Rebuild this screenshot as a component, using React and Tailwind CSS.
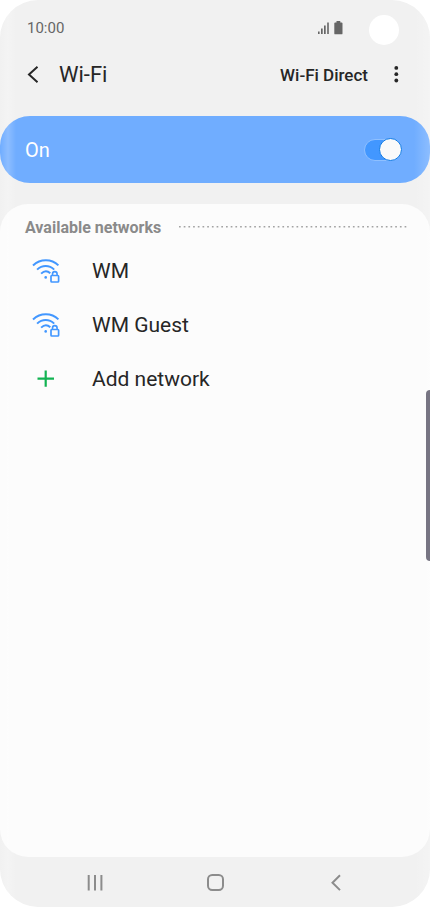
import { useState } from "react";

function SecureWifiIcon() {
  return (
    <svg viewBox="0 0 28 26" className="h-[26px] w-7" fill="none" stroke="#4297ff" strokeWidth="2" aria-hidden="true">
      <path d="M1 7.4C8.4.5 19.4.5 26.4 7.4" />
      <path d="M5.1 11.6C10.100 6.800 17.300 6.800 22.200 11.600" />
      <path d="M9.100 15.600C12.100 12.700 15.600 12.700 18.300 15.300" />
      <circle cx="13.700" cy="19.400" r="1.300" fill="#4297ff" stroke="none" />
      <rect x="19" y="17.500" width="7.600" height="6.500" rx="0.800" strokeWidth="1.700" />
      <path d="M20.500 17.500v-1.600a2.300 2.300 0 0 1 4.600 0v1.600" strokeWidth="1.600" />
    </svg>
  );
}

function PlusIcon() {
  return (
    <svg viewBox="0 0 28 26" className="h-[26px] w-7" fill="none" stroke="#12b352" strokeWidth="2.2" aria-hidden="true">
      <path d="M5.500 12.600h16.500M13.700 4.400v16.400" />
    </svg>
  );
}

function NetworkRow({ icon, label }) {
  return (
    <li>
      <button type="button" className="flex h-[54px] w-full items-center gap-8 pl-8 text-left text-[21px] leading-6 text-[#262626]">
        {icon}
        {label}
      </button>
    </li>
  );
}

function StatusBar() {
  return (
    <div className="relative flex h-14 items-center justify-between pr-[87px] pl-[27px] text-[#666]">
      <span className="text-[15px] leading-5">10:00</span>
      <svg viewBox="0 0 26 14" className="h-3.5 w-[26px]" fill="#666" aria-hidden="true">
        <path d="M1 10.500h1.600V13H1zM4 7.500h1.700V13H4zM7 4.500h1.700V13H7zM10.200 1.500h1.600V13h-1.600z" />
        <path d="M19.500 0h3.800v1.400h1.300c.5 0 .9.4.9.9v10.100c0 .5-.4.9-.9.9h-6.400c-.5 0-.9-.4-.9-.9V2.300c0-.5.4-.9.9-.9h1.300z" />
      </svg>
      <span className="absolute top-[15px] right-[31px] size-[30px] rounded-full bg-white" />
    </div>
  );
}

export default function App() {
  const [enabled, setEnabled] = useState(true);

  return (
    <div className="min-h-screen bg-white font-[Roboto,sans-serif]">
      <div className="relative flex min-h-screen flex-col overflow-hidden rounded-[38px] bg-[#f1f1f1]">
        <StatusBar />

        <header className="flex h-[37px] items-center pr-[22px] pl-6 text-[#262626]">
          <button type="button" aria-label="Back" className="flex size-6 items-center">
            <svg viewBox="0 0 24 24" className="size-6" fill="none" stroke="#262626" strokeWidth="2">
              <path d="M13.500 3.700L5 11.500l8.500 7.800" />
            </svg>
          </button>
          <h1 className="ml-[11px] flex-1 text-[22px] leading-7">Wi-Fi</h1>
          <button type="button" className="mr-4 text-[17px] leading-6 font-medium">Wi-Fi Direct</button>
          <button type="button" aria-label="More options" className="flex size-6 items-center justify-center">
            <svg viewBox="0 0 24 24" className="size-6" fill="#262626">
              <circle cx="12.300" cy="4.900" r="1.900" />
              <circle cx="12.300" cy="11.200" r="1.900" />
              <circle cx="12.300" cy="17.500" r="1.900" />
            </svg>
          </button>
        </header>

        <label className="mt-[23px] flex h-[67px] items-center justify-between rounded-[30px] bg-[#70adff] pr-7 pl-[25px] text-xl text-white">
          <span>On</span>
          <span className="relative flex h-[22px] w-[38px] items-center">
            <input
              type="checkbox"
              role="switch"
              checked={enabled}
              onChange={(e) => setEnabled(e.target.checked)}
              className="peer h-[22px] w-[38px] appearance-none rounded-full border border-[#8fc0ff] bg-[#8fb0dd] checked:bg-[#4297ff]"
            />
            <span className="pointer-events-none absolute left-0 size-[23px] rounded-full border border-[#0f7ae5] bg-[#fafafa] peer-checked:right-0 peer-checked:left-auto" />
          </span>
        </label>

        <main className="mt-[21px] flex-1 rounded-[28px] bg-[#fcfcfc] pt-3">
          <div className="flex h-6 items-center gap-[18px] pr-[22px] pl-[25px]">
            <h2 className="text-base leading-6 font-bold text-[#8a8a8a]">Available networks</h2>
            <svg className="h-1 min-w-0 flex-1" aria-hidden="true">
              <line x1="0" y1="0.8" x2="100%" y2="0.8" stroke="#a3a3a3" strokeWidth="1.6" strokeDasharray="1.7 3" />
            </svg>
          </div>
          <ul className="pt-1">
            <NetworkRow icon={<SecureWifiIcon />} label="WM" />
            <NetworkRow icon={<SecureWifiIcon />} label="WM Guest" />
            <NetworkRow icon={<PlusIcon />} label="Add network" />
          </ul>
        </main>

        <nav className="flex h-[50px] items-center justify-between px-[83px]">
          <button type="button" aria-label="Recent apps">
            <svg viewBox="0 0 24 24" className="size-6" fill="none" stroke="#8c8c8c" strokeWidth="2">
              <path d="M5.700 5v15.500M12 5v15.500M18.400 5v15.500" />
            </svg>
          </button>
          <button type="button" aria-label="Home">
            <svg viewBox="0 0 24 24" className="size-6" fill="none" stroke="#8c8c8c" strokeWidth="2">
              <rect x="5" y="5" width="15" height="15" rx="4.200" />
            </svg>
          </button>
          <button type="button" aria-label="Back">
            <svg viewBox="0 0 24 24" className="size-6" fill="none" stroke="#8c8c8c" strokeWidth="2">
              <path d="M17 5.300l-7.500 7.400 7.500 7.400" />
            </svg>
          </button>
        </nav>

        <span className="pointer-events-none absolute inset-y-0 left-0 w-4 bg-linear-to-r from-white/0 via-white/20 to-white/0" />
        <span className="pointer-events-none absolute inset-y-0 right-0 w-4 bg-linear-to-r from-white/0 via-white/10 to-white/20" />
        <span className="absolute top-[390px] right-0 h-[171px] w-1 rounded-l-sm bg-[#777583]" />
      </div>
    </div>
  );
}
